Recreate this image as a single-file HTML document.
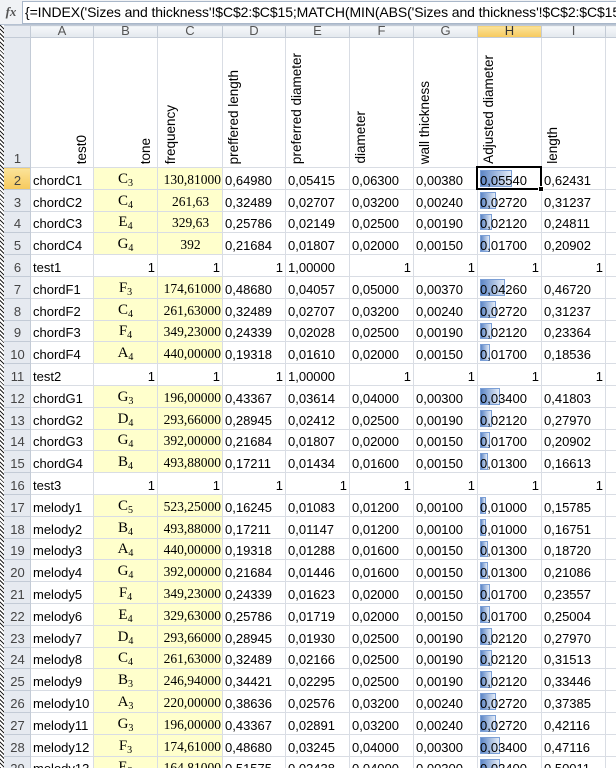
<!DOCTYPE html>
<html><head><meta charset="utf-8"><style>
*{margin:0;padding:0;box-sizing:border-box}
body{width:616px;height:768px;overflow:hidden;background:#fff;font-family:"Liberation Sans",sans-serif;position:relative}
#fb{position:absolute;left:0;top:0;width:616px;height:25px;background:#f0f2f5;border-bottom:1px solid #b6c2d2}
#fx{position:absolute;left:0;top:0;width:22px;height:24px;font-family:"Liberation Serif",serif;font-style:italic;font-weight:bold;font-size:13px;color:#555;text-align:center;line-height:24px}
#fi{position:absolute;left:22px;top:1px;right:-2px;height:23px;background:#fff;border:1px solid #a9b7c9;font-size:14px;letter-spacing:-0.1px;line-height:21px;padding-left:2px;white-space:nowrap;overflow:hidden;color:#000}
#wrap{position:absolute;left:0;top:25px;width:616px;height:743px;overflow:hidden}
table{border-collapse:collapse;table-layout:fixed;width:660px}
td{border:1px solid #d9dde4;font-size:13px;height:21.8px;white-space:nowrap;overflow:hidden;vertical-align:bottom;padding:0 2px 1px 2px;position:relative;color:#000}
tr.h td{height:12px;background:linear-gradient(#f6f8fa,#e3e8ee);border-color:#c3cbd6;color:#555;text-align:center;font-size:13px;line-height:10px;padding:0;vertical-align:top}
tr.h td.sel{background:linear-gradient(#fbe39a,#f6c95c);color:#333}
td.rh{background:#e6eaf0;border-color:#c3cbd6;color:#444;text-align:center;padding:0 0 1px 4px}
td.rh.sel{background:linear-gradient(#fbe39a,#f6c95c)}
tr.r1 td{height:130px}
.y{background:#ffffcc}
.r{text-align:right}
.c{text-align:center}
.s{font-family:"Liberation Serif",serif;font-size:13.5px;padding-right:1px}
.t{font-family:"Liberation Serif",serif;font-size:15px;text-align:center}
.t sub{font-size:10px;vertical-align:-3px;line-height:0}
.rot{position:absolute;bottom:3px;writing-mode:vertical-rl;transform:rotate(180deg);font-size:13.5px;line-height:14px}
.bar{position:absolute;left:2px;top:2px;bottom:2px;background:linear-gradient(90deg,#5d86c6,#e4ecf7);border:1px solid #7b9fd6;z-index:0}
.hv{position:relative;z-index:1}
#dash{position:absolute;left:0;top:25px;width:4px;height:743px;background:repeating-linear-gradient(45deg,#222 0 1px,#fff 1px 3px);z-index:5}
#selb{position:absolute;left:476px;top:166px;width:66px;height:24px;border:2px solid #000;z-index:6}
#hdl{position:absolute;left:538px;top:186px;width:6px;height:6px;background:#000;border:1px solid #fff;z-index:7}
</style></head><body>
<div id="fb"><div id="fx">fx</div><div id="fi">{=INDEX('Sizes and thickness'!$C$2:$C$15;MATCH(MIN(ABS('Sizes and thickness'!$C$2:$C$15-calculations</div></div>
<div id="wrap"><table>
<colgroup><col style="width:30px"><col style="width:63px"><col style="width:64px"><col style="width:65px"><col style="width:63px"><col style="width:64px"><col style="width:64px"><col style="width:64px"><col style="width:64px"><col style="width:64px"><col style="width:55px"></colgroup>
<tr class="h"><td style="background:#e6eaf0"></td><td>A</td><td>B</td><td>C</td><td>D</td><td>E</td><td>F</td><td>G</td><td class="sel">H</td><td>I</td><td></td></tr>
<tr class="r1"><td class="rh">1</td><td><div class="rot" style="right:4px">test0</div></td><td><div class="rot" style="right:4px">tone</div></td><td><div class="rot" style="left:6px">frequency</div></td><td><div class="rot" style="left:4px">preffered length</div></td><td><div class="rot" style="left:4px">preferred diameter</div></td><td><div class="rot" style="left:4px">diameter</div></td><td><div class="rot" style="left:4px">wall thickness</div></td><td><div class="rot" style="left:4px">Adjusted diameter</div></td><td><div class="rot" style="left:4px">length</div></td><td></td></tr>
<tr><td class="rh sel">2</td><td>chordC1</td><td class="y t">C<sub>3</sub></td><td class="y s r">130,81000</td><td>0,64980</td><td>0,05415</td><td>0,06300</td><td>0,00380</td><td><div class="bar" style="width:32px"></div><span class="hv">0,05540</span></td><td>0,62431</td><td></td></tr>
<tr><td class="rh">3</td><td>chordC2</td><td class="y t">C<sub>4</sub></td><td class="y s c">261,63</td><td>0,32489</td><td>0,02707</td><td>0,03200</td><td>0,00240</td><td><div class="bar" style="width:16px"></div><span class="hv">0,02720</span></td><td>0,31237</td><td></td></tr>
<tr><td class="rh">4</td><td>chordC3</td><td class="y t">E<sub>4</sub></td><td class="y s c">329,63</td><td>0,25786</td><td>0,02149</td><td>0,02500</td><td>0,00190</td><td><div class="bar" style="width:12px"></div><span class="hv">0,02120</span></td><td>0,24811</td><td></td></tr>
<tr><td class="rh">5</td><td>chordC4</td><td class="y t">G<sub>4</sub></td><td class="y s c">392</td><td>0,21684</td><td>0,01807</td><td>0,02000</td><td>0,00150</td><td><div class="bar" style="width:10px"></div><span class="hv">0,01700</span></td><td>0,20902</td><td></td></tr>
<tr><td class="rh">6</td><td>test1</td><td class="r">1</td><td class="r">1</td><td class="r">1</td><td>1,00000</td><td class="r">1</td><td class="r">1</td><td class="r">1</td><td class="r">1</td><td></td></tr>
<tr><td class="rh">7</td><td>chordF1</td><td class="y t">F<sub>3</sub></td><td class="y s r">174,61000</td><td>0,48680</td><td>0,04057</td><td>0,05000</td><td>0,00370</td><td><div class="bar" style="width:25px"></div><span class="hv">0,04260</span></td><td>0,46720</td><td></td></tr>
<tr><td class="rh">8</td><td>chordF2</td><td class="y t">C<sub>4</sub></td><td class="y s r">261,63000</td><td>0,32489</td><td>0,02707</td><td>0,03200</td><td>0,00240</td><td><div class="bar" style="width:16px"></div><span class="hv">0,02720</span></td><td>0,31237</td><td></td></tr>
<tr><td class="rh">9</td><td>chordF3</td><td class="y t">F<sub>4</sub></td><td class="y s r">349,23000</td><td>0,24339</td><td>0,02028</td><td>0,02500</td><td>0,00190</td><td><div class="bar" style="width:12px"></div><span class="hv">0,02120</span></td><td>0,23364</td><td></td></tr>
<tr><td class="rh">10</td><td>chordF4</td><td class="y t">A<sub>4</sub></td><td class="y s r">440,00000</td><td>0,19318</td><td>0,01610</td><td>0,02000</td><td>0,00150</td><td><div class="bar" style="width:10px"></div><span class="hv">0,01700</span></td><td>0,18536</td><td></td></tr>
<tr><td class="rh">11</td><td>test2</td><td class="r">1</td><td class="r">1</td><td class="r">1</td><td>1,00000</td><td class="r">1</td><td class="r">1</td><td class="r">1</td><td class="r">1</td><td></td></tr>
<tr><td class="rh">12</td><td>chordG1</td><td class="y t">G<sub>3</sub></td><td class="y s r">196,00000</td><td>0,43367</td><td>0,03614</td><td>0,04000</td><td>0,00300</td><td><div class="bar" style="width:20px"></div><span class="hv">0,03400</span></td><td>0,41803</td><td></td></tr>
<tr><td class="rh">13</td><td>chordG2</td><td class="y t">D<sub>4</sub></td><td class="y s r">293,66000</td><td>0,28945</td><td>0,02412</td><td>0,02500</td><td>0,00190</td><td><div class="bar" style="width:12px"></div><span class="hv">0,02120</span></td><td>0,27970</td><td></td></tr>
<tr><td class="rh">14</td><td>chordG3</td><td class="y t">G<sub>4</sub></td><td class="y s r">392,00000</td><td>0,21684</td><td>0,01807</td><td>0,02000</td><td>0,00150</td><td><div class="bar" style="width:10px"></div><span class="hv">0,01700</span></td><td>0,20902</td><td></td></tr>
<tr><td class="rh">15</td><td>chordG4</td><td class="y t">B<sub>4</sub></td><td class="y s r">493,88000</td><td>0,17211</td><td>0,01434</td><td>0,01600</td><td>0,00150</td><td><div class="bar" style="width:8px"></div><span class="hv">0,01300</span></td><td>0,16613</td><td></td></tr>
<tr><td class="rh">16</td><td>test3</td><td class="r">1</td><td class="r">1</td><td class="r">1</td><td class="r">1</td><td class="r">1</td><td class="r">1</td><td class="r">1</td><td class="r">1</td><td></td></tr>
<tr><td class="rh">17</td><td>melody1</td><td class="y t">C<sub>5</sub></td><td class="y s r">523,25000</td><td>0,16245</td><td>0,01083</td><td>0,01200</td><td>0,00100</td><td><div class="bar" style="width:6px"></div><span class="hv">0,01000</span></td><td>0,15785</td><td></td></tr>
<tr><td class="rh">18</td><td>melody2</td><td class="y t">B<sub>4</sub></td><td class="y s r">493,88000</td><td>0,17211</td><td>0,01147</td><td>0,01200</td><td>0,00100</td><td><div class="bar" style="width:6px"></div><span class="hv">0,01000</span></td><td>0,16751</td><td></td></tr>
<tr><td class="rh">19</td><td>melody3</td><td class="y t">A<sub>4</sub></td><td class="y s r">440,00000</td><td>0,19318</td><td>0,01288</td><td>0,01600</td><td>0,00150</td><td><div class="bar" style="width:8px"></div><span class="hv">0,01300</span></td><td>0,18720</td><td></td></tr>
<tr><td class="rh">20</td><td>melody4</td><td class="y t">G<sub>4</sub></td><td class="y s r">392,00000</td><td>0,21684</td><td>0,01446</td><td>0,01600</td><td>0,00150</td><td><div class="bar" style="width:8px"></div><span class="hv">0,01300</span></td><td>0,21086</td><td></td></tr>
<tr><td class="rh">21</td><td>melody5</td><td class="y t">F<sub>4</sub></td><td class="y s r">349,23000</td><td>0,24339</td><td>0,01623</td><td>0,02000</td><td>0,00150</td><td><div class="bar" style="width:10px"></div><span class="hv">0,01700</span></td><td>0,23557</td><td></td></tr>
<tr><td class="rh">22</td><td>melody6</td><td class="y t">E<sub>4</sub></td><td class="y s r">329,63000</td><td>0,25786</td><td>0,01719</td><td>0,02000</td><td>0,00150</td><td><div class="bar" style="width:10px"></div><span class="hv">0,01700</span></td><td>0,25004</td><td></td></tr>
<tr><td class="rh">23</td><td>melody7</td><td class="y t">D<sub>4</sub></td><td class="y s r">293,66000</td><td>0,28945</td><td>0,01930</td><td>0,02500</td><td>0,00190</td><td><div class="bar" style="width:12px"></div><span class="hv">0,02120</span></td><td>0,27970</td><td></td></tr>
<tr><td class="rh">24</td><td>melody8</td><td class="y t">C<sub>4</sub></td><td class="y s r">261,63000</td><td>0,32489</td><td>0,02166</td><td>0,02500</td><td>0,00190</td><td><div class="bar" style="width:12px"></div><span class="hv">0,02120</span></td><td>0,31513</td><td></td></tr>
<tr><td class="rh">25</td><td>melody9</td><td class="y t">B<sub>3</sub></td><td class="y s r">246,94000</td><td>0,34421</td><td>0,02295</td><td>0,02500</td><td>0,00190</td><td><div class="bar" style="width:12px"></div><span class="hv">0,02120</span></td><td>0,33446</td><td></td></tr>
<tr><td class="rh">26</td><td>melody10</td><td class="y t">A<sub>3</sub></td><td class="y s r">220,00000</td><td>0,38636</td><td>0,02576</td><td>0,03200</td><td>0,00240</td><td><div class="bar" style="width:16px"></div><span class="hv">0,02720</span></td><td>0,37385</td><td></td></tr>
<tr><td class="rh">27</td><td>melody11</td><td class="y t">G<sub>3</sub></td><td class="y s r">196,00000</td><td>0,43367</td><td>0,02891</td><td>0,03200</td><td>0,00240</td><td><div class="bar" style="width:16px"></div><span class="hv">0,02720</span></td><td>0,42116</td><td></td></tr>
<tr><td class="rh">28</td><td>melody12</td><td class="y t">F<sub>3</sub></td><td class="y s r">174,61000</td><td>0,48680</td><td>0,03245</td><td>0,04000</td><td>0,00300</td><td><div class="bar" style="width:20px"></div><span class="hv">0,03400</span></td><td>0,47116</td><td></td></tr>
<tr><td class="rh">29</td><td>melody13</td><td class="y t">E<sub>3</sub></td><td class="y s r">164,81000</td><td>0,51575</td><td>0,03438</td><td>0,04000</td><td>0,00300</td><td><div class="bar" style="width:20px"></div><span class="hv">0,03400</span></td><td>0,50011</td><td></td></tr>
</table></div>
<div id="dash"></div>
<div id="selb"></div><div id="hdl"></div>
</body></html>
